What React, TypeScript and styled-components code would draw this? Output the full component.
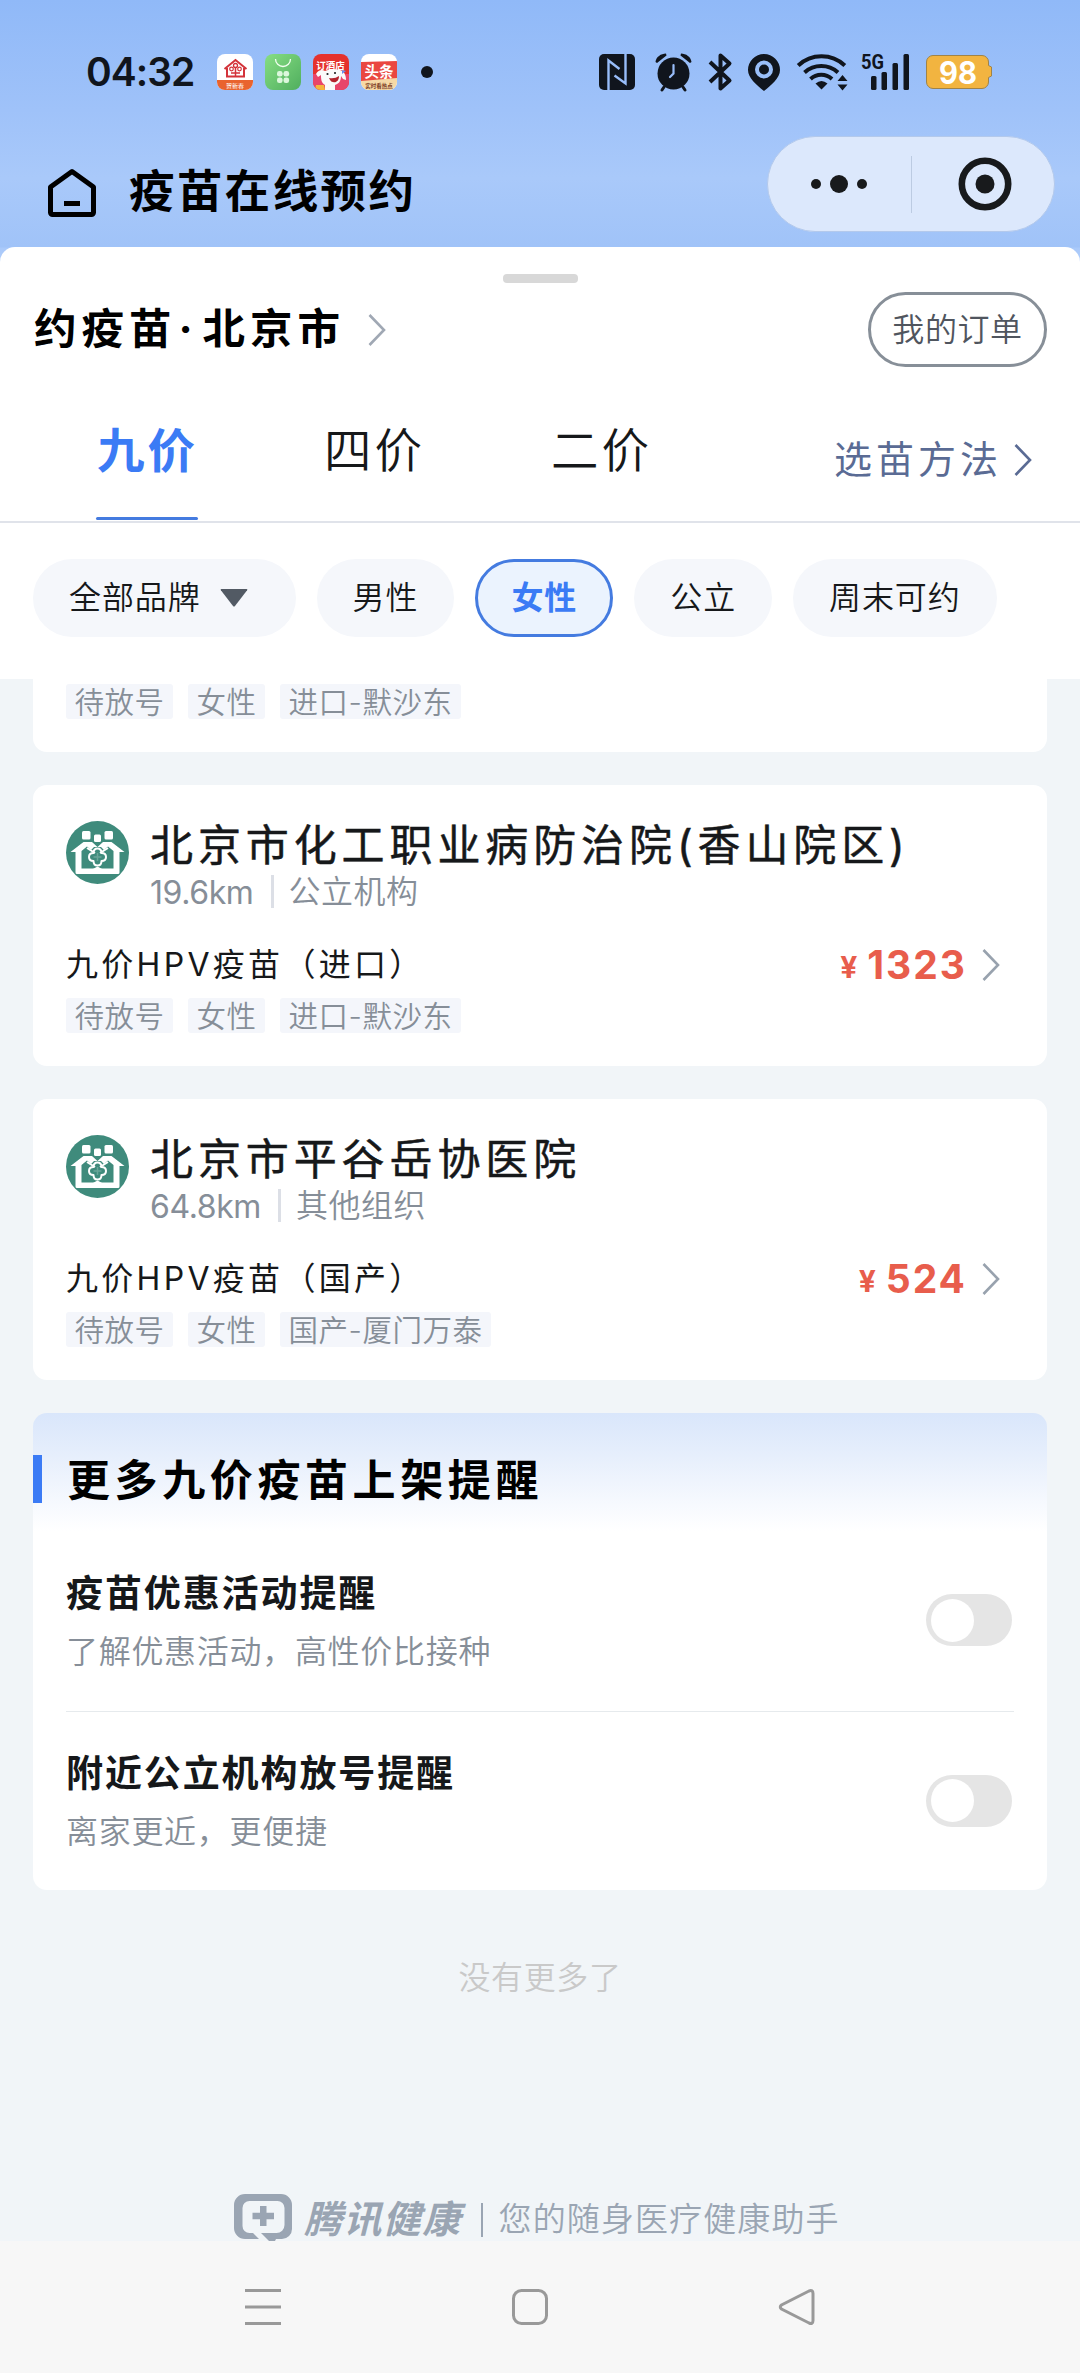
import React, { useState } from "react";
import styled, { createGlobalStyle, css } from "styled-components";

const fontStack = `Inter, "Noto Sans CJK SC", sans-serif`;
const cjkStack = `"Noto Sans CJK SC", sans-serif`;

const blue = "#3b7bf5";
const ink = "#16181a";
const muted = "#868e98";

const GlobalStyle = createGlobalStyle`
  * { box-sizing: border-box; }
  body { margin: 0; background: #f1f5f8; }
  button { font: inherit; color: inherit; border: 0; background: none; padding: 0; letter-spacing: inherit; }
`;

const Screen = styled.div`
  width: 1080px;
  height: 2373px;
  display: flex;
  flex-direction: column;
  overflow: hidden;
  font-family: ${fontStack};
  line-height: 1.1;
  color: ${ink};
  white-space: nowrap;
  background: linear-gradient(180deg, #90b9f8 0, #9fc2f9 110px, #a9c9fa 178px, #a0c3f8 247px, #a9c9fa 248px, #b4d0fb 270px);
`;

/* ---------- status bar ---------- */

const StatusBar = styled.div`
  height: 136px;
  flex: none;
  padding: 8px 88px 0 86px;
  display: flex;
  align-items: center;
  justify-content: space-between;
`;
const StatusGroup = styled.div<{ $gap: number }>`
  display: flex;
  align-items: center;
  gap: ${(p) => p.$gap}px;
  svg { display: block; overflow: visible; flex: none; }
`;
const Clock = styled.span`
  width: 119px;
  font-size: 39px;
  font-weight: 600;
  line-height: 44px;
  letter-spacing: -1px;
  color: #10151d;
`;
const MoreDot = styled.span`
  width: 12px;
  height: 12px;
  margin-left: 12px;
  border-radius: 50%;
  background: #10151d;
`;

/* ---------- mini program nav ---------- */

const NavBar = styled.header`
  height: 111px;
  flex: none;
  padding: 0 25px 0 47px;
  display: flex;
  align-items: flex-start;
  justify-content: space-between;
`;
const NavTitle = styled.div`
  height: 113px;
  display: flex;
  align-items: center;
  gap: 32px;
  font-size: 45.5px;
  font-weight: 700;
  letter-spacing: 2.4px;
  color: #000;
`;
const Capsule = styled.div`
  width: 288px;
  height: 96px;
  border-radius: 48px;
  border: 1px solid #b3c9ec;
  background: #dce8fc;
  display: grid;
  grid-template-columns: 1fr 1px 1fr;
  align-items: center;
  justify-items: center;
`;
const CapsuleLine = styled.span`
  width: 1px;
  height: 57px;
  background: #bccbe2;
`;

/* ---------- sheet header ---------- */

const SheetHead = styled.section`
  height: 432px;
  flex: none;
  background: #fff;
  border-radius: 15px 15px 0 0;
  display: flex;
  flex-direction: column;
`;
const Handle = styled.div`
  width: 75px;
  height: 9px;
  margin: 27px auto 9px;
  border-radius: 4px;
  background: #d8d8d8;
`;
const LocationRow = styled.div`
  height: 75px;
  padding: 0 33px 0 34px;
  display: flex;
  align-items: center;
  justify-content: space-between;
`;
const Location = styled.div`
  display: flex;
  align-items: center;
  font-size: 42.5px;
  font-weight: 700;
  letter-spacing: 5px;
  color: #000;
  svg { margin-left: 23px; }
`;
const MidDot = styled.span`
  width: 18px;
  margin-right: 8px;
  display: flex;
  justify-content: center;
  letter-spacing: 0;
`;
const OrdersButton = styled.button`
  width: 179px;
  height: 75px;
  border: 3px solid #878f98 !important;
  border-radius: 38px;
  font-size: 32px !important;
  font-weight: 350;
  letter-spacing: 0.6px !important;
  color: #50555e !important;
`;
const TabBar = styled.nav`
  height: 156px;
  padding: 0 48px 0 33px;
  border-bottom: 2px solid #e0e3ea;
  display: flex;
`;
const Tab = styled.button<{ $on: boolean }>`
  width: 227px;
  padding: 59px 0 1px !important;
  display: flex;
  flex-direction: column;
  align-items: center;
  justify-content: space-between;
  font-size: 47.5px !important;
  line-height: 50px !important;
  letter-spacing: 3px !important;
  font-weight: ${(p) => (p.$on ? 700 : 350)} !important;
  color: ${(p) => (p.$on ? blue : ink)} !important;
  text-indent: 2px;
  &::after {
    content: "";
    width: 102px;
    height: 3px;
    border-radius: 2px;
    background: ${(p) => (p.$on ? "#447be0" : "transparent")};
  }
`;
const MethodLink = styled.a`
  margin-left: auto;
  padding-top: 73px;
  height: 113px;
  display: flex;
  align-items: center;
  gap: 12px;
  font-size: 38px;
  letter-spacing: 4px;
  color: #5a6b94;
`;
const ChipRow = styled.div`
  padding: 36px 33px 0;
  display: flex;
  gap: 21px;
`;
const Chip = styled.button<{ $on?: boolean; $wide?: boolean }>`
  height: 78px;
  padding: 0 36px !important;
  border-radius: 39px;
  display: flex;
  align-items: center;
  font-size: 32px !important;
  font-weight: 350;
  letter-spacing: 0.9px !important;
  background: #f5f7fb !important;
  color: ${ink} !important;
  ${(p) => p.$wide && css`padding-right: 48px !important; svg { margin-left: 19px; }`}
  ${(p) => p.$on && css`
    padding: 0 33px !important;
    border: 3px solid #447be0 !important;
    background: #ebf3fe !important;
    color: ${blue} !important;
    font-weight: 700;
  `}
`;

/* ---------- list ---------- */

const List = styled.main`
  height: 1562px;
  flex: none;
  padding: 0 33px;
  background: #f1f5f8;
  display: flex;
  flex-direction: column;
  gap: 33px;
`;
const Card = styled.article<{ $cut?: boolean }>`
  flex: none;
  background: #fff;
  border-radius: ${(p) => (p.$cut ? "0 0 14px 14px" : "14px")};
  padding: ${(p) => (p.$cut ? "5px" : "36px")} 33px 33px;
`;
const HospitalHead = styled.div`
  display: flex;
  gap: 21px;
  svg { flex: none; display: block; }
`;
const HospitalName = styled.h2`
  margin: 0;
  font-size: 43px;
  line-height: 48px;
  height: 46px;
  font-weight: 400;
  letter-spacing: 4.9px;
  -webkit-text-stroke: 0.5px ${ink};
`;
const HospitalMeta = styled.div`
  height: 37px;
  margin-top: 6px;
  display: flex;
  align-items: center;
  font-size: 32px;
  font-weight: 350;
  letter-spacing: 0.5px;
  color: ${muted};
`;
const Distance = styled.span`
  font-size: 32px;
  font-weight: 400;
  letter-spacing: -0.4px;
  margin-top: 2px;
`;
const MetaLine = styled.i`
  width: 3px;
  height: 33px;
  margin: 0 15px 0 17px;
  background: #dcdfe6;
`;
const ProductRow = styled.div`
  height: 40px;
  margin: 35px 14px 13px 0;
  display: flex;
  align-items: center;
  font-size: 32px;
  letter-spacing: 3.3px;
`;
const Price = styled.span`
  margin-left: auto;
  margin-right: 15px;
  display: flex;
  align-items: center;
  font-weight: 700;
  font-size: 39px;
  letter-spacing: 2px;
  color: #e85d4c;
`;
const Yen = styled.small`
  margin: 4px 10px 0 0;
  font-size: 30px;
  letter-spacing: 0;
`;
const Tags = styled.div`
  display: flex;
  gap: 15px;
`;
const Tag = styled.span`
  height: 35px;
  padding: 0 8.5px;
  border-radius: 3px;
  background: #f4f6fb;
  font-size: 29.5px;
  line-height: 36px;
  letter-spacing: 0.5px;
  font-weight: 350;
  color: ${muted};
`;

/* ---------- reminders ---------- */

const ReminderCard = styled.section`
  flex: none;
  height: 477px;
  border-radius: 14px;
  overflow: hidden;
  background: linear-gradient(180deg, #d9e6fb 0, #e7effc 45px, #f6f9fe 90px, #fff 118px);
`;
const ReminderTitle = styled.h2`
  margin: 42px 0 28px;
  height: 48px;
  padding-left: 25px;
  border-left: 9px solid ${blue};
  font-size: 43px;
  line-height: 51px;
  font-weight: 700;
  letter-spacing: 4.6px;
  color: #000;
`;
const ReminderRow = styled.div`
  height: 180px;
  margin: 0 33px;
  padding: 0 2px 2px 0;
  display: flex;
  align-items: center;
  justify-content: space-between;
  & + & { border-top: 1px solid #e6eaed; }
`;
const ReminderName = styled.div`
  font-size: 37px;
  line-height: 46px;
  font-weight: 700;
  letter-spacing: 1.9px;
`;
const ReminderHint = styled.div`
  margin-top: 17px;
  font-size: 32px;
  line-height: 36px;
  font-weight: 350;
  letter-spacing: 0.7px;
  color: ${muted};
`;
const Switch = styled.button<{ $on: boolean }>`
  width: 86px;
  height: 52px;
  padding: 4.5px !important;
  border-radius: 26px;
  display: flex;
  justify-content: ${(p) => (p.$on ? "flex-end" : "flex-start")};
  background: ${(p) => (p.$on ? blue : "#e5e5e5")} !important;
  &::before {
    content: "";
    width: 43px;
    height: 43px;
    border-radius: 50%;
    background: #fff;
  }
`;
const EndNote = styled.p`
  margin: 34px 0 0;
  text-align: center;
  font-size: 32px;
  line-height: 42px;
  font-weight: 350;
  letter-spacing: 0.6px;
  color: #c9c9c9;
`;
const Brand = styled.footer`
  margin: auto 0 0;
  height: 47px;
  padding-left: 201px;
  display: flex;
  align-items: center;
  line-height: 40px;
  color: #9aa5b3;
`;
const BrandName = styled.span`
  margin: 3px 0 0 12px;
  font-size: 38px;
  font-weight: 700;
  font-style: italic;
  letter-spacing: 1.4px;
`;
const BrandLine = styled.i`
  width: 2px;
  height: 34px;
  margin: 4px 16px 0 19px;
  background: #9aa5b3;
`;
const Slogan = styled.span`
  margin-top: 3px;
  font-size: 33px;
  font-weight: 350;
  letter-spacing: 1.1px;
`;

const SystemNav = styled.nav`
  flex: 1;
  background: #f7f7f7;
  padding: 47px 264px 0 244px;
  display: flex;
  justify-content: space-between;
  svg { display: block; }
`;

/* ---------- drawings ---------- */

const Chevron = ({ color, w = 2.6 }: { color: string; w?: number }) => (
  <svg width="18" height="32" viewBox="0 0 18 32" fill="none" stroke={color} strokeWidth={w}>
    <path d="M1.500 1 16 16 1.500 31" />
  </svg>
);

const AppIcons = () => (
  <>
    <svg width="36" height="36" viewBox="0 0 36 36">
      <clipPath id="a1"><rect width="36" height="36" rx="8" /></clipPath>
      <g clipPath="url(#a1)">
        <rect width="36" height="36" fill="#fff" />
        <rect y="26" width="36" height="10" fill="#e9632e" />
        <path d="M7.500 15 18.500 6l11 9M10 14v8.500h17V14" fill="none" stroke="#d3333a" strokeWidth="2" />
        <circle cx="18.500" cy="11.500" r="2" fill="none" stroke="#d3333a" strokeWidth="1.300" />
        <circle cx="14.500" cy="15" r="1.800" fill="none" stroke="#d3333a" strokeWidth="1.200" />
        <circle cx="22.500" cy="15" r="1.800" fill="none" stroke="#d3333a" strokeWidth="1.200" />
        <path d="M18.500 13v9M14 19h9" stroke="#d3333a" strokeWidth="1.500" />
        <text x="18" y="34" fontSize="6" fill="#fff" textAnchor="middle" fontFamily={cjkStack}>贺新春</text>
      </g>
    </svg>
    <svg width="36" height="36" viewBox="0 0 36 36">
      <defs><linearGradient id="g2" x2="1" y2="1"><stop stopColor="#86de83" /><stop offset="1" stopColor="#50ae5e" /></linearGradient></defs>
      <rect width="36" height="36" rx="8" fill="url(#g2)" />
      <path d="M10.500 5a7.500 7.500 0 0 0 15 0" fill="none" stroke="#f2fff0" strokeWidth="1.300" />
      <g fill="#dcf7dc">
        <rect x="12" y="17" width="5.600" height="5.600" rx="2.300" /><rect x="18.500" y="17" width="5.600" height="5.600" rx="2.300" />
        <rect x="12" y="23.500" width="5.600" height="5.600" rx="2.300" /><rect x="18.500" y="23.500" width="5.600" height="5.600" rx="2.300" />
      </g>
    </svg>
    <svg width="36" height="36" viewBox="0 0 36 36">
      <clipPath id="a3"><rect width="36" height="36" rx="8" /></clipPath>
      <g clipPath="url(#a3)">
        <rect width="36" height="36" fill="#e5322d" />
        <rect y="20" width="36" height="16" fill="#e8456a" />
        <path d="M3 20c2-4 6-5 9-3 4-2 12-2 15-1 4 1 6 5 6 10l-3-1-2-3c0 6-3 8-6 9v5H12v-5c-4-2-4-7-4-10l-3 2z" fill="#fafafa" />
        <circle cx="14.500" cy="20" r="1.100" fill="#222" /><circle cx="22" cy="19" r="1.100" fill="#222" />
        <path d="M16 24q6 1 10-2c0 5-3 7-6 6-2 0-3-2-4-4z" fill="#b3232d" />
        <path d="M3 31h8l1 5H2z" fill="#f4b53c" />
        <path d="m29 16 4 1-4 3z" fill="#6e8be8" />
        <text x="17.500" y="14.500" fontSize="9.500" fontWeight="700" fill="#fff" textAnchor="middle" fontFamily={cjkStack}>订酒店</text>
      </g>
    </svg>
    <svg width="36" height="36" viewBox="0 0 36 36">
      <clipPath id="a4"><rect width="36" height="36" rx="8" /></clipPath>
      <g clipPath="url(#a4)">
        <rect width="36" height="36" fill="#fff" />
        <path d="M0 8 36 7v18L0 28z" fill="#ea4740" />
        <path d="M0 27 36 24v12H0z" fill="#f6d9a6" />
        <text x="18" y="23" fontSize="14.500" fontWeight="700" fill="#fff" textAnchor="middle" fontFamily={cjkStack}>头条</text>
        <text x="18" y="34" fontSize="5.500" fontWeight="700" fill="#7a3a1e" textAnchor="middle" fontFamily={cjkStack}>实时看热点</text>
      </g>
    </svg>
  </>
);

const dark = "#10151d";

const SystemIcons = () => (
  <>
    <svg width="39" height="38" viewBox="0 -1 39 38">
      <rect width="36" height="36" rx="5" fill={dark} />
      <path d="M9.500 36V6.500L20.500 15M26.500 0v29.500L15.500 21.500" fill="none" stroke="#98bdf9" strokeWidth="2.400" />
    </svg>
    <svg width="37" height="38" viewBox="0 0 37 38">
      <circle cx="18.500" cy="20.500" r="16" fill={dark} />
      <path d="M18.500 12v8.500L15 24" fill="none" stroke="#98bdf9" strokeWidth="2.200" strokeLinecap="round" />
      <path d="M.5 9C1 4 6 .5 11 .5L11.500 2.500 2 10zM36.500 9C36 4 31 .5 26 .5L25.500 2.500 35 10z" fill={dark} />
      <path d="m9 34-2 3M28 34l2 3" stroke={dark} strokeWidth="3" strokeLinecap="round" />
    </svg>
    <svg width="22" height="38" viewBox="0 0 22 38">
      <path d="M1 9 20.500 27.500 11.500 35.500V2.500L20.500 10.500 1 29" fill="none" stroke={dark} strokeWidth="4" strokeLinejoin="round" />
    </svg>
    <svg width="32" height="38" viewBox="0 -1 32 38">
      <path fillRule="evenodd" d="M16 0a16 16 0 0 1 16 16c0 8-8.500 15-16 21C8.500 31 0 24 0 16A16 16 0 0 1 16 0zm0 6.500a9 9 0 1 0 0 18 9 9 0 0 0 0-18z" fill={dark} />
      <circle cx="16" cy="15.500" r="5" fill={dark} />
    </svg>
    <svg width="47" height="38" viewBox="0 0 47 38">
      <g fill="none" stroke={dark} strokeWidth="4">
        <path d="M1.200 12.500a34 34 0 0 1 46.600 0" /><path d="M7.500 19.500a25 25 0 0 1 33.500 0" /><path d="M13.500 26a16 16 0 0 1 21.500 0" />
      </g>
      <path d="M24.500 36.500 18.500 30.500q6-5 12 0z" fill={dark} />
      <path d="m45.500 22 5 6h-10zM45.500 37.500l5-6h-10z" fill={dark} />
    </svg>
    <svg width="48" height="38" viewBox="0 0 48 38">
      <text x="0" y="15.500" fontSize="20" fontWeight="700" fill={dark} fontFamily="Roboto, sans-serif" textLength="23" lengthAdjust="spacingAndGlyphs">5G</text>
      <g fill={dark}>
        <rect x="10" y="23" width="5.500" height="14" rx="1.500" /><rect x="20.500" y="19" width="5.500" height="18" rx="1.500" />
        <rect x="31.500" y="10" width="5.500" height="27" rx="1.500" /><rect x="42.500" y="1" width="5.500" height="36" rx="1.500" />
      </g>
    </svg>
    <svg width="66" height="36" viewBox="0 0 66 36">
      <path d="M7 1.500h49a6.500 6.500 0 0 1 6.500 6.500v3.500l3 1.500v9l-3 1.500V28a6.500 6.500 0 0 1-6.500 6.500H7A6.500 6.500 0 0 1 .5 28V8A6.500 6.500 0 0 1 7 1.500z" fill="#f2b440" stroke="#a08347" />
      <text x="32" y="29.500" fontSize="31" fontWeight="700" fill="#fff" textAnchor="middle" fontFamily="Inter, sans-serif" textLength="38" lengthAdjust="spacingAndGlyphs">98</text>
    </svg>
  </>
);

const HospitalLogo = () => (
  <svg width="63" height="63" viewBox="0 0 63 63">
    <circle cx="31.500" cy="31.500" r="31.500" fill="#3f8b7c" />
    <g fill="#fff">
      <rect x="16" y="10" width="8.500" height="8.500" rx="1.500" />
      <rect x="28" y="13.500" width="7" height="7.500" rx="1.500" />
      <rect x="38.500" y="10" width="8.500" height="8.500" rx="1.500" />
      <path d="M4.500 31 17.500 21H26l5.500 5 5.500-5h8.500l13 10H53.500v20.500a1.500 1.500 0 0 1-1.500 1.500H11a1.500 1.500 0 0 1-1.500-1.500V31z" />
    </g>
    <path d="M15.500 47.500V30l5.500-4.500L25 29l3-3h7l3 3 4-3.500 5.500 4.500v17.500z" fill="#3f8b7c" />
    <path d="M31.500 27.500c3 0 4 2 4 4.500 2.500 0 4.500 1 4.500 4s-2 4-4.500 4c0 2.500-1 4.500-4 4.500s-4-2-4-4.500C25 40 23 39 23 36s2-4 4.500-4c0-2.500 1-4.500 4-4.500z" fill="#3f8b7c" stroke="#fff" strokeWidth="2" strokeLinejoin="round" />
    <path d="M31.500 32v8M27.500 36h8" stroke="#69a598" strokeWidth="1.500" />
    <path d="m21 27 8 5M42 27l-8 5" stroke="#fff" strokeWidth="2" />
    <path d="m26 48.500 5.500-3 5.500 3z" fill="#fff" />
  </svg>
);

const BrandLogo = () => (
  <svg width="58" height="47" viewBox="0 0 58 47" fill="#9aa5b3">
    <path fillRule="evenodd" d="M11 0h36a11 11 0 0 1 11 11v24a10 10 0 0 1-10 10h-6l-1 2h-6l-8-8h15.500a8 8 0 0 0 8-8V14a7 7 0 0 0-7-7h-28A7 7 0 0 0 8.500 14v18a7 7 0 0 0 7 7H19l6 6H11A11 11 0 0 1 0 34V11A11 11 0 0 1 11 0z" />
    <path d="M26 12h6.500v6.800H40v6.500h-7.500V32H26v-6.700h-7.500v-6.500H26z" />
  </svg>
);

/* ---------- content ---------- */

const hospitals = [
  { name: "北京市化工职业病防治院(香山院区)", distance: "19.6km", kind: "公立机构", product: "九价HPV疫苗（进口）", price: "1323", tags: ["待放号", "女性", "进口-默沙东"] },
  { name: "北京市平谷岳协医院", distance: "64.8km", kind: "其他组织", product: "九价HPV疫苗（国产）", price: "524", tags: ["待放号", "女性", "国产-厦门万泰"] },
];
const reminders = [
  { name: "疫苗优惠活动提醒", hint: "了解优惠活动，高性价比接种" },
  { name: "附近公立机构放号提醒", hint: "离家更近，更便捷" },
];
const tabs = ["九价", "四价", "二价"];
const chips = ["男性", "女性", "公立", "周末可约"];

const TagList = ({ tags }: { tags: string[] }) => (
  <Tags>{tags.map((t) => <Tag key={t}>{t}</Tag>)}</Tags>
);

export default function App() {
  const [tab, setTab] = useState("九价");
  const [chip, setChip] = useState("女性");
  const [on, setOn] = useState<Record<string, boolean>>({});

  return (
    <Screen>
      <GlobalStyle />
      <StatusBar>
        <StatusGroup $gap={12}>
          <Clock>04:32</Clock>
          <AppIcons />
          <MoreDot />
        </StatusGroup>
        <StatusGroup $gap={17}><SystemIcons /></StatusGroup>
      </StatusBar>

      <NavBar>
        <NavTitle>
          <svg width="50" height="50" viewBox="0 0 50 50" fill="none" stroke="#000" strokeWidth="5" strokeLinejoin="round">
            <path d="M25 3.500 46.500 19v25.500a2 2 0 0 1-2 2h-39a2 2 0 0 1-2-2V19z" />
            <path d="M17 35.500h16" />
          </svg>
          疫苗在线预约
        </NavTitle>
        <Capsule>
          <svg width="58" height="20" viewBox="0 0 58 20" fill="#181a1c">
            <circle cx="6" cy="10" r="5" /><circle cx="29" cy="10" r="9" /><circle cx="52" cy="10" r="5" />
          </svg>
          <CapsuleLine />
          <svg width="58" height="54" viewBox="0 0 58 54" fill="none">
            <circle cx="31" cy="27" r="23.200" stroke="#181a1c" strokeWidth="6.600" />
            <circle cx="31" cy="27" r="9.500" fill="#181a1c" />
          </svg>
        </Capsule>
      </NavBar>

      <SheetHead>
        <Handle />
        <LocationRow>
          <Location>
            约疫苗<MidDot>·</MidDot>北京市
            <Chevron color="#a0a8b4" />
          </Location>
          <OrdersButton>我的订单</OrdersButton>
        </LocationRow>
        <TabBar>
          {tabs.map((t) => <Tab key={t} $on={t === tab} onClick={() => setTab(t)}>{t}</Tab>)}
          <MethodLink>选苗方法<Chevron color="#5a6b94" /></MethodLink>
        </TabBar>
        <ChipRow>
          <Chip $wide>
            全部品牌
            <svg width="28" height="18" viewBox="0 0 28 18"><path d="M1.500 0h25q1.500 0 .6 1.300L15 17q-1 1-2 0L.9 1.300Q0 0 1.500 0z" fill="#525a64" /></svg>
          </Chip>
          {chips.map((c) => <Chip key={c} $on={c === chip} onClick={() => setChip(c)}>{c}</Chip>)}
        </ChipRow>
      </SheetHead>

      <List>
        <Card $cut><TagList tags={["待放号", "女性", "进口-默沙东"]} /></Card>
        {hospitals.map((h) => (
          <Card key={h.name}>
            <HospitalHead>
              <HospitalLogo />
              <div>
                <HospitalName>{h.name}</HospitalName>
                <HospitalMeta><Distance>{h.distance}</Distance><MetaLine />{h.kind}</HospitalMeta>
              </div>
            </HospitalHead>
            <ProductRow>
              {h.product}
              <Price><Yen>¥</Yen>{h.price}</Price>
              <Chevron color="#98a2ae" />
            </ProductRow>
            <TagList tags={h.tags} />
          </Card>
        ))}
        <ReminderCard>
          <ReminderTitle>更多九价疫苗上架提醒</ReminderTitle>
          {reminders.map((r) => (
            <ReminderRow key={r.name}>
              <div>
                <ReminderName>{r.name}</ReminderName>
                <ReminderHint>{r.hint}</ReminderHint>
              </div>
              <Switch $on={!!on[r.name]} aria-label={r.name} onClick={() => setOn({ ...on, [r.name]: !on[r.name] })} />
            </ReminderRow>
          ))}
        </ReminderCard>
        <EndNote>没有更多了</EndNote>
        <Brand>
          <BrandLogo />
          <BrandName>腾讯健康</BrandName>
          <BrandLine />
          <Slogan>您的随身医疗健康助手</Slogan>
        </Brand>
      </List>

      <SystemNav>
        <svg width="38" height="38" viewBox="0 0 38 38" stroke="#999" strokeWidth="3"><path d="M1 2.500h36M1 19h36M1 35.500h36" /></svg>
        <svg width="38" height="38" viewBox="0 0 38 38" fill="none" stroke="#999" strokeWidth="3"><rect x="2.500" y="2.500" width="33" height="33" rx="8" /></svg>
        <svg width="38" height="38" viewBox="0 0 38 38" fill="none" stroke="#999" strokeWidth="3"><path d="M31 3 3.500 17q-2.500 2 0 4L31 35q4 1.500 4-2.500v-27Q35 1.500 31 3z" /></svg>
      </SystemNav>
    </Screen>
  );
}
